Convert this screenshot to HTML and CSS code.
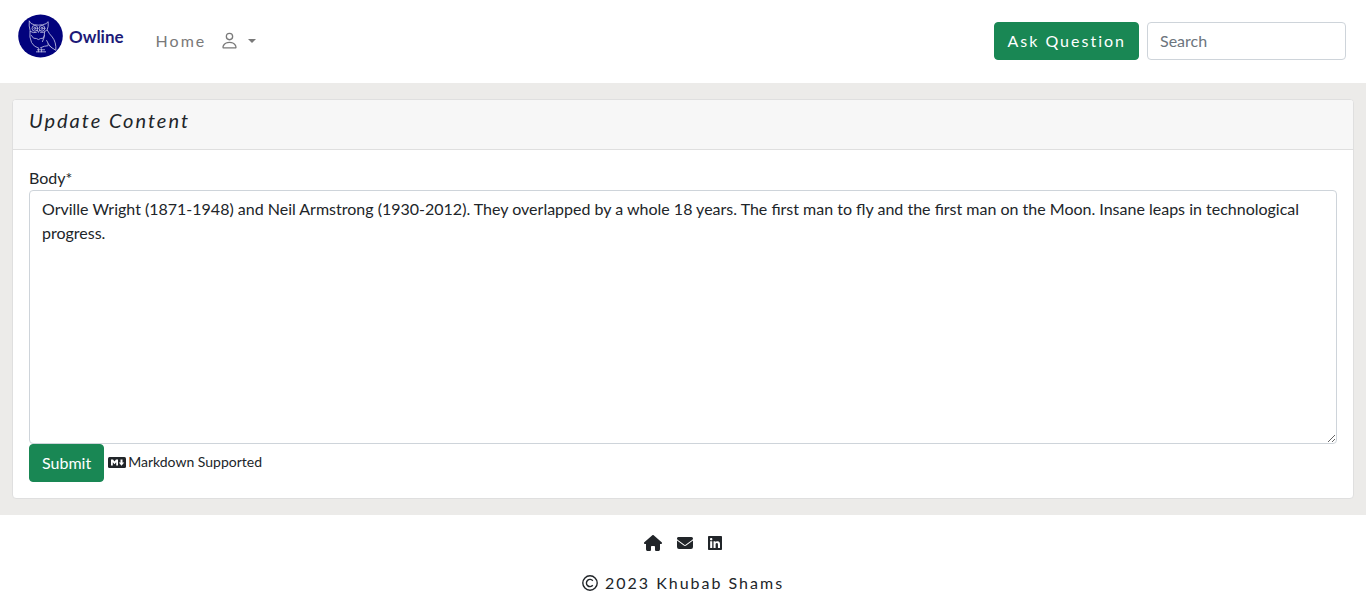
FILE: index.html
```html
<!DOCTYPE html>
<html lang="en">
<head>
<meta charset="utf-8">
<meta name="viewport" content="width=device-width, initial-scale=1">
<title>Owline - Update Content</title>
<link rel="stylesheet" href="styles.css">
</head>
<body>
<header class="navbar">
  <a class="brand" href="#">
    <svg class="brand-logo" viewBox="0 0 44 44" aria-hidden="true">
      <ellipse cx="22" cy="21.500" rx="21.800" ry="21" fill="#02027d"/>
      <g fill="none" stroke="#b4b4dc" stroke-width="0.9" stroke-linecap="round" stroke-linejoin="round">
        <path d="M11 7q1 3 5 3.500q4 .8 8 0q4-.5 5.500-3q.5 5-1 8q2 4 5 7q4 5 3.500 13q-4-2-8-6M11 7q-.5 5 .8 9q-1 7 1.500 12q2 4 7 5.500"/>
        <circle cx="16.500" cy="14" r="2.800"/><circle cx="23.500" cy="14" r="2.800"/>
        <circle cx="16.500" cy="14" r="1"/><circle cx="23.500" cy="14" r="1"/>
        <path d="M19 16l1 2 1-2M12 17q3 2 6 1M22 18q3 1 6-2M13 21q2 4 5 3q2 2 4 0q3 1 4-3M26 18q0 6-2 9M28 26q2 5 5 7M22 33q4-2 7-2M19 35h7M18 37h9M20 34v3M23 34v3"/>
      </g>
    </svg>
    <span class="brand-name">Owline</span>
  </a>
  <nav class="nav">
    <a class="nav-link" href="#">Home</a>
    <a class="nav-link user-menu" href="#" aria-label="Account menu">
      <svg class="icon-user" viewBox="0 0 16 16" aria-hidden="true"><path fill="currentColor" d="M8 7.500a3.200 3.200 0 1 0 0-6.400 3.200 3.200 0 0 0 0 6.400m2.100-3.200a2.100 2.100 0 1 1-4.200 0 2.100 2.100 0 0 1 4.200 0M14 13.200c0 1-1 1.200-1 1.200H3s-1-.2-1-1.200 1-4.600 6-4.600 6 3.600 6 4.600m-1.100 0c-.001-.246-.154-.986-.832-1.764C11.400 10.500 10.289 9.700 8 9.700s-3.400.8-4.068 1.736c-.678.778-.83 1.518-.832 1.764z"/></svg>
      <span class="caret"></span>
    </a>
  </nav>
  <form class="search">
    <button class="button button-spaced" type="button">Ask Question</button>
    <input class="field search-field" type="search" placeholder="Search" aria-label="Search">
  </form>
</header>
<main class="content">
  <section class="card">
    <div class="card-header"><h1 class="card-title">Update Content</h1></div>
    <form class="card-body">
      <label class="label" for="body">Body*</label>
      <textarea class="field editor" id="body" rows="10">Orville Wright (1871-1948) and Neil Armstrong (1930-2012). They overlapped by a whole 18 years. The first man to fly and the first man on the Moon. Insane leaps in technological progress.</textarea>
      <div class="actions">
        <button class="button" type="submit">Submit</button>
        <small class="hint">
          <svg class="icon-markdown" viewBox="0 0 18 12" aria-hidden="true"><rect y="1" width="18" height="11" rx="1.500" fill="#212529"/><path fill="#fff" d="M3 9.500v-6h2l1.500 2 1.500-2h2v6H8.200V6.300L6.500 8.300 4.800 6.300v3.200zM12.500 3.500h2v3H16.200L13.500 9.700 10.800 6.500h1.700z"/></svg>
          <span>Markdown Supported</span>
        </small>
      </div>
    </form>
  </section>
</main>
<footer class="footer">
  <div class="links">
    <a class="footer-link" href="#" aria-label="Home"><svg class="icon-home" viewBox="0 0 576 512"><path fill="currentColor" d="M575.800 255.500c0 18-15 32.100-32 32.100h-32l.7 160.200c0 40-20 64.200-40 64.200H392c-22 0-40-18-40-40v-88c0-18-14-32-32-32h-64c-18 0-32 14-32 32v88c0 22-18 40-40 40h-80c-22 0-40-24-40-64V287.600H32c-18 0-32-14-32-32.100 0-9 3-17 10-24L266.400 8c7-7 15-8 22-8s15 2 21 7l255.400 224.500c8 7 12 15 11 24z"/></svg></a>
    <a class="footer-link" href="#" aria-label="Email"><svg class="icon-square" viewBox="0 0 16 16"><path fill="currentColor" d="M1.500 2h13A1.500 1.500 0 0 1 16 3.500c0 .5-.2.900-.6 1.200L8.600 9.800a1 1 0 0 1-1.200 0L.6 4.700A1.500 1.500 0 0 1 1.500 2M0 5.500l6.800 5.100a2 2 0 0 0 2.400 0L16 5.500V12a2 2 0 0 1-2 2H2a2 2 0 0 1-2-2z"/></svg></a>
    <a class="footer-link" href="#" aria-label="LinkedIn"><svg class="icon-linkedin" viewBox="0 0 448 512"><path fill="currentColor" d="M416 32H31.900C14.300 32 0 46.500 0 64.300v383.400C0 465.500 14.300 480 31.900 480H416c17.600 0 32-14.500 32-32.300V64.300c0-17.800-14.400-32.300-32-32.300M135.400 416H69V202.200h66.500V416zm-33.200-243c-21.300 0-38.500-17.300-38.500-38.500S80.900 96 102.200 96c21.200 0 38.500 17.300 38.500 38.500S123.500 173 102.200 173m282.100 243h-66.400V312c0-24.800-.5-56.700-34.500-56.700-34.600 0-39.900 27-39.900 54.900V416h-66.400V202.200h63.700v29.200h.9c8.900-16.800 30.600-34.500 62.900-34.500 67.200 0 79.700 44.300 79.700 101.900z"/></svg></a>
  </div>
  <p class="copyright">
    <svg class="icon-square" viewBox="0 0 16 16" aria-hidden="true"><g fill="none" stroke="currentColor" stroke-width="1.400"><circle cx="8" cy="8" r="7.200"/><path d="M10.800 5.700a3.600 3.600 0 1 0 0 4.600"/></g></svg>
    <span>2023 Khubab Shams</span>
  </p>
</footer>
</body>
</html>
```
FILE: styles.css
```css
* {
  box-sizing: border-box;
}

body {
  margin: 0;
  background: #fff;
  color: #212529;
  font: 16px/24px Lato, sans-serif;
}

svg {
  display: block;
}

.navbar {
  display: flex;
  align-items: flex-start;
  padding: 14px 20px 23px 18px;
}

.brand {
  display: flex;
  align-items: center;
  gap: 6px;
  margin-right: 32px;
  color: #1d1a78;
  font-size: 17px;
  font-weight: 700;
  text-decoration: none;
}

.brand-logo {
  width: 45px;
  height: 45px;
}

.nav {
  display: flex;
  gap: 14px;
  padding-top: 15px;
}

.nav-link {
  color: #797979;
  letter-spacing: 2px;
  text-decoration: none;
}

.user-menu {
  display: flex;
  align-items: center;
  gap: 9px;
}

.icon-user {
  width: 19px;
  height: 20px;
}

.caret {
  border: 4px solid transparent;
  border-top-color: currentColor;
  border-bottom: 0;
}

.search {
  display: flex;
  gap: 8px;
  margin-left: auto;
  padding-top: 8px;
}

.button {
  padding: 6px 12px;
  border: 1px solid #198754;
  border-radius: 4px;
  background: #198754;
  color: #fff;
  font: inherit;
}

.button-spaced {
  letter-spacing: 2px;
}

.field {
  padding: 6px 12px;
  border: 1px solid #ced4da;
  border-radius: 4px;
  background: #fff;
  color: #212529;
  font: inherit;
}

.field::placeholder {
  color: #6c757d;
}

.search-field {
  width: 199px;
  appearance: none;
}

.content {
  padding: 16px 12px;
  background: #ecebe9;
}

.card {
  border: 1px solid #dfdfdf;
  border-radius: 4px;
  background: #fff;
}

.card-header {
  padding: 8px 16px 17px;
  border-bottom: 1px solid #dfdfdf;
  border-radius: 3px 3px 0 0;
  background: #f7f7f7;
}

.card-title {
  margin: 0;
  font-size: 20px;
  font-style: italic;
  font-weight: 400;
  line-height: 24px;
  letter-spacing: 2px;
}

.card-body {
  padding: 16px;
}

.label {
  display: block;
}

.editor {
  display: block;
  width: 100%;
  resize: vertical;
}

.actions {
  display: flex;
  align-items: center;
  gap: 4px;
}

.hint {
  display: flex;
  align-items: center;
  gap: 2px;
  padding-bottom: 2px;
  font-size: 14px;
}

.icon-markdown {
  width: 18px;
  height: 12px;
}

.footer {
  padding: 16px;
  text-align: center;
}

.links {
  display: flex;
  justify-content: center;
  gap: 15px;
  margin-bottom: 16px;
}

.footer-link {
  display: flex;
  align-items: center;
  height: 24px;
  color: #212529;
}

.icon-home {
  width: 18px;
  height: 16px;
}

.icon-square {
  width: 16px;
  height: 16px;
}

.icon-linkedin {
  width: 14px;
  height: 16px;
}

.copyright {
  display: flex;
  align-items: center;
  justify-content: center;
  gap: 7px;
  margin: 0;
  letter-spacing: 2px;
}
```
